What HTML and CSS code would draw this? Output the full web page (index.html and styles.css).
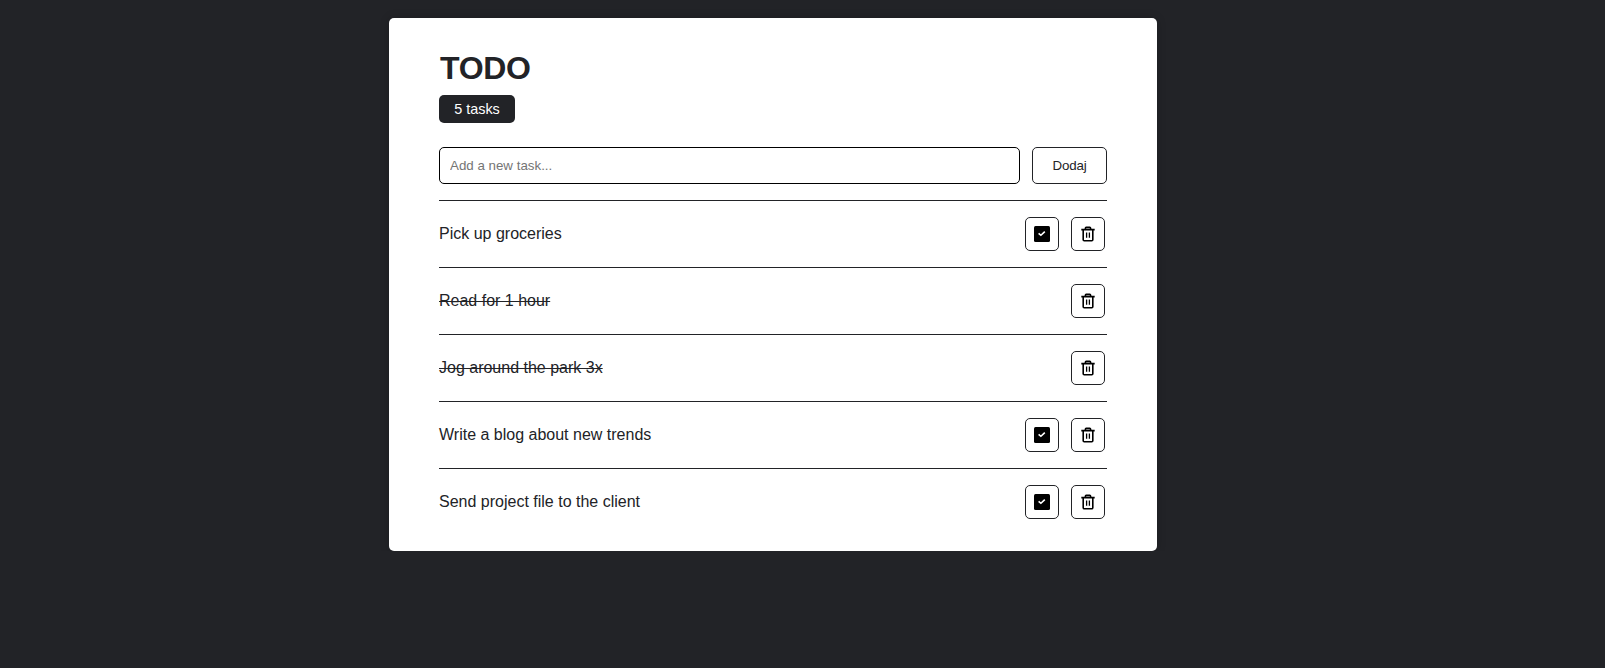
FILE: index.html
```
<!DOCTYPE html>
<html lang="en">
<head>
<meta charset="utf-8">
<title>TODO</title>
<link rel="stylesheet" href="styles.css">
</head>
<body>
<svg class="sprite" aria-hidden="true">
  <symbol id="check" viewBox="0 0 20 20">
    <rect x="2" y="2" width="16" height="16" rx="1.5"/>
    <path d="M6.6 9.3l2.3 2 3.9-3.6" fill="none" stroke="#fff" stroke-width="1.6"/>
  </symbol>
  <symbol id="trash" viewBox="0 0 20 20">
    <path d="M3.3 5.6h13.4M5.2 5.8v9.9q0 1 1 1h7.6q1 0 1-1v-9.9M7.4 5.4V4.2q0-.8.8-.8h3.6q.8 0 .8.8v1.2" fill="none" stroke="#000" stroke-width="1.6"/>
    <path d="M8.6 8.6v5.1M11.4 8.6v5.1" fill="none" stroke="#000" stroke-width="1.3"/>
  </symbol>
</svg>
<main class="card">
  <h1 class="title">TODO</h1>
  <div class="count">5 tasks</div>
  <form class="form">
    <input class="input" type="text" placeholder="Add a new task...">
    <button class="add" type="button">Dodaj</button>
  </form>
  <ul class="list">
    <li class="item"><span>Pick up groceries</span><div class="actions"><button class="icon" type="button"><svg><use href="#check"/></svg></button><button class="icon" type="button"><svg><use href="#trash"/></svg></button></div></li>
    <li class="item"><span class="done">Read for 1 hour</span><div class="actions"><button class="icon" type="button"><svg><use href="#trash"/></svg></button></div></li>
    <li class="item"><span class="done">Jog around the park 3x</span><div class="actions"><button class="icon" type="button"><svg><use href="#trash"/></svg></button></div></li>
    <li class="item"><span>Write a blog about new trends</span><div class="actions"><button class="icon" type="button"><svg><use href="#check"/></svg></button><button class="icon" type="button"><svg><use href="#trash"/></svg></button></div></li>
    <li class="item"><span>Send project file to the client</span><div class="actions"><button class="icon" type="button"><svg><use href="#check"/></svg></button><button class="icon" type="button"><svg><use href="#trash"/></svg></button></div></li>
  </ul>
</main>
</body>
</html>
```

FILE: styles.css
```
* {
  box-sizing: border-box;
}

body {
  margin: 0;
  padding: 18px 0 0 389px;
  background: #222327;
  color: #222327;
  font: 16px "Liberation Sans", Arial, sans-serif;
}

.sprite {
  display: none;
}

.card {
  width: 768px;
  height: 533px;
  padding: 32px 50px 0;
  background: #fff;
  border-radius: 5px;
  box-shadow: 0 0 10px rgba(0, 0, 0, 0.2);
}

.title {
  margin: 0 0 8px;
  padding-left: 1px;
  font-size: 32px;
  line-height: 37px;
  letter-spacing: -0.3px;
}

.count {
  width: 76px;
  height: 28px;
  line-height: 28px;
  font-size: 14.4px;
  text-align: center;
  color: #fff;
  background: #222327;
  border-radius: 5px;
}

.form {
  display: flex;
  gap: 12px;
  margin: 24px 0 16px;
}

.input {
  flex: 1;
  height: 37px;
  padding: 0 10px;
  border: 1px solid #000;
  border-radius: 5px;
  font: 13.333px "Liberation Sans", Arial, sans-serif;
}

.input::placeholder {
  color: #757575;
}

.add {
  width: 75px;
  height: 37px;
  padding: 0;
  background: #fff;
  color: #222327;
  border: 1px solid #222327;
  border-radius: 5px;
  font: 13.333px "Liberation Sans", Arial, sans-serif;
  letter-spacing: -0.2px;
}

.list {
  margin: 0;
  padding: 0;
  list-style: none;
}

.item {
  display: flex;
  align-items: center;
  justify-content: space-between;
  height: 67px;
  padding-right: 2px;
  border-top: 1px solid #222327;
}

.done {
  text-decoration: line-through;
}

.actions {
  display: flex;
  gap: 12px;
}

.icon {
  display: flex;
  align-items: center;
  justify-content: center;
  width: 34px;
  height: 34px;
  padding: 0;
  background: #fff;
  border: 1px solid #222327;
  border-radius: 5px;
}

.icon svg {
  width: 20px;
  height: 20px;
}
```
